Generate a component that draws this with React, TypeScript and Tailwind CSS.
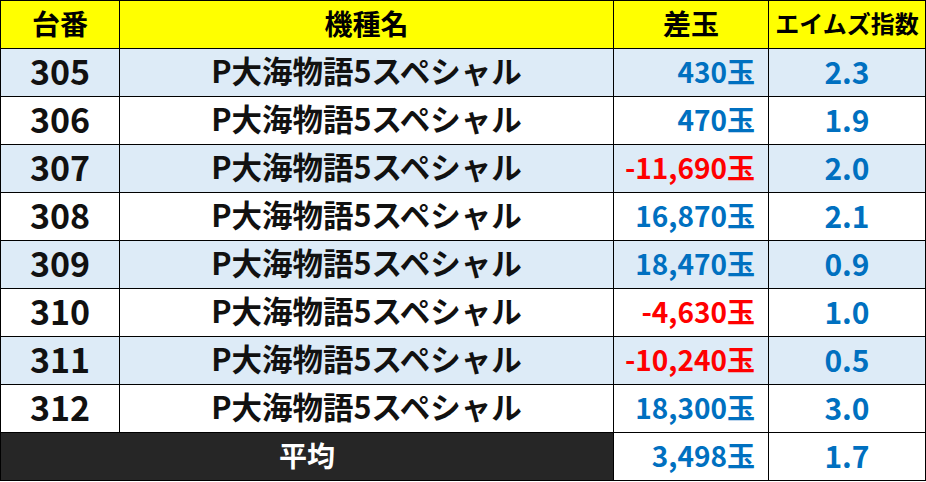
import React from "react";

interface MachineRow {
    number: number;
    name: string;
    balls: number;
    aims: string;
}

const rows: MachineRow[] = [
    { number: 305, name: "P大海物語5スペシャル", balls: 430, aims: "2.3" },
    { number: 306, name: "P大海物語5スペシャル", balls: 470, aims: "1.9" },
    { number: 307, name: "P大海物語5スペシャル", balls: -11690, aims: "2.0" },
    { number: 308, name: "P大海物語5スペシャル", balls: 16870, aims: "2.1" },
    { number: 309, name: "P大海物語5スペシャル", balls: 18470, aims: "0.9" },
    { number: 310, name: "P大海物語5スペシャル", balls: -4630, aims: "1.0" },
    { number: 311, name: "P大海物語5スペシャル", balls: -10240, aims: "0.5" },
    { number: 312, name: "P大海物語5スペシャル", balls: 18300, aims: "3.0" },
];

const font = { fontFamily: '"Noto Sans CJK JP", "Noto Sans", sans-serif' };

const App: React.FC = () => {
    return (
        <div className="w-[926px] h-[482px] bg-white" style={font}>
            <table className="w-[926px] table-fixed border-collapse border border-black font-bold leading-none">
                <colgroup>
                    <col className="w-[119px]" />
                    <col className="w-[494px]" />
                    <col className="w-[155px]" />
                    <col className="w-[157px]" />
                </colgroup>
                <thead>
                    <tr className="h-[48px] bg-[#ffff00] text-black">
                        <th className="border border-black pb-[3px] text-[28px] text-center">台番</th>
                        <th className="border border-black pb-[3px] text-[28px] text-center">機種名</th>
                        <th className="border border-black pb-[3px] text-[28px] text-center">差玉</th>
                        <th className="border border-black pb-[3px] text-[24px] text-center whitespace-nowrap">エイムズ指数</th>
                    </tr>
                </thead>
                <tbody>
                    {rows.map((row, i) => (
                        <tr key={row.number} className={i % 2 === 0 ? "h-[48px] bg-[#ddebf7]" : "h-[48px] bg-white"}>
                            <td className="border border-black pb-[4px] text-center text-[34px] text-[#111]">{row.number}</td>
                            <td className="border border-black pb-[4px] text-center text-[30.5px] text-[#111] whitespace-nowrap">{row.name}</td>
                            <td className={row.balls < 0
                                ? "border border-black pb-[3px] text-right pr-[13px] text-[28px] text-[#ff0000] whitespace-nowrap"
                                : "border border-black pb-[3px] text-right pr-[13px] text-[28px] text-[#0070c0] whitespace-nowrap"}>
                                {row.balls.toLocaleString("en-US")}玉
                            </td>
                            <td className="border border-black pb-[4px] text-center text-[30px] text-[#0070c0]">{row.aims}</td>
                        </tr>
                    ))}
                    <tr className="h-[48px]">
                        <td colSpan={2} className="border border-black bg-[#262626] pb-[4px] text-center text-[28px] text-white">平均</td>
                        <td className="border border-black bg-white pb-[3px] text-right pr-[13px] text-[28px] text-[#0070c0]">3,498玉</td>
                        <td className="border border-black bg-white pb-[4px] text-center text-[30px] text-[#0070c0]">1.7</td>
                    </tr>
                </tbody>
            </table>
        </div>
    );
};

export default App;
